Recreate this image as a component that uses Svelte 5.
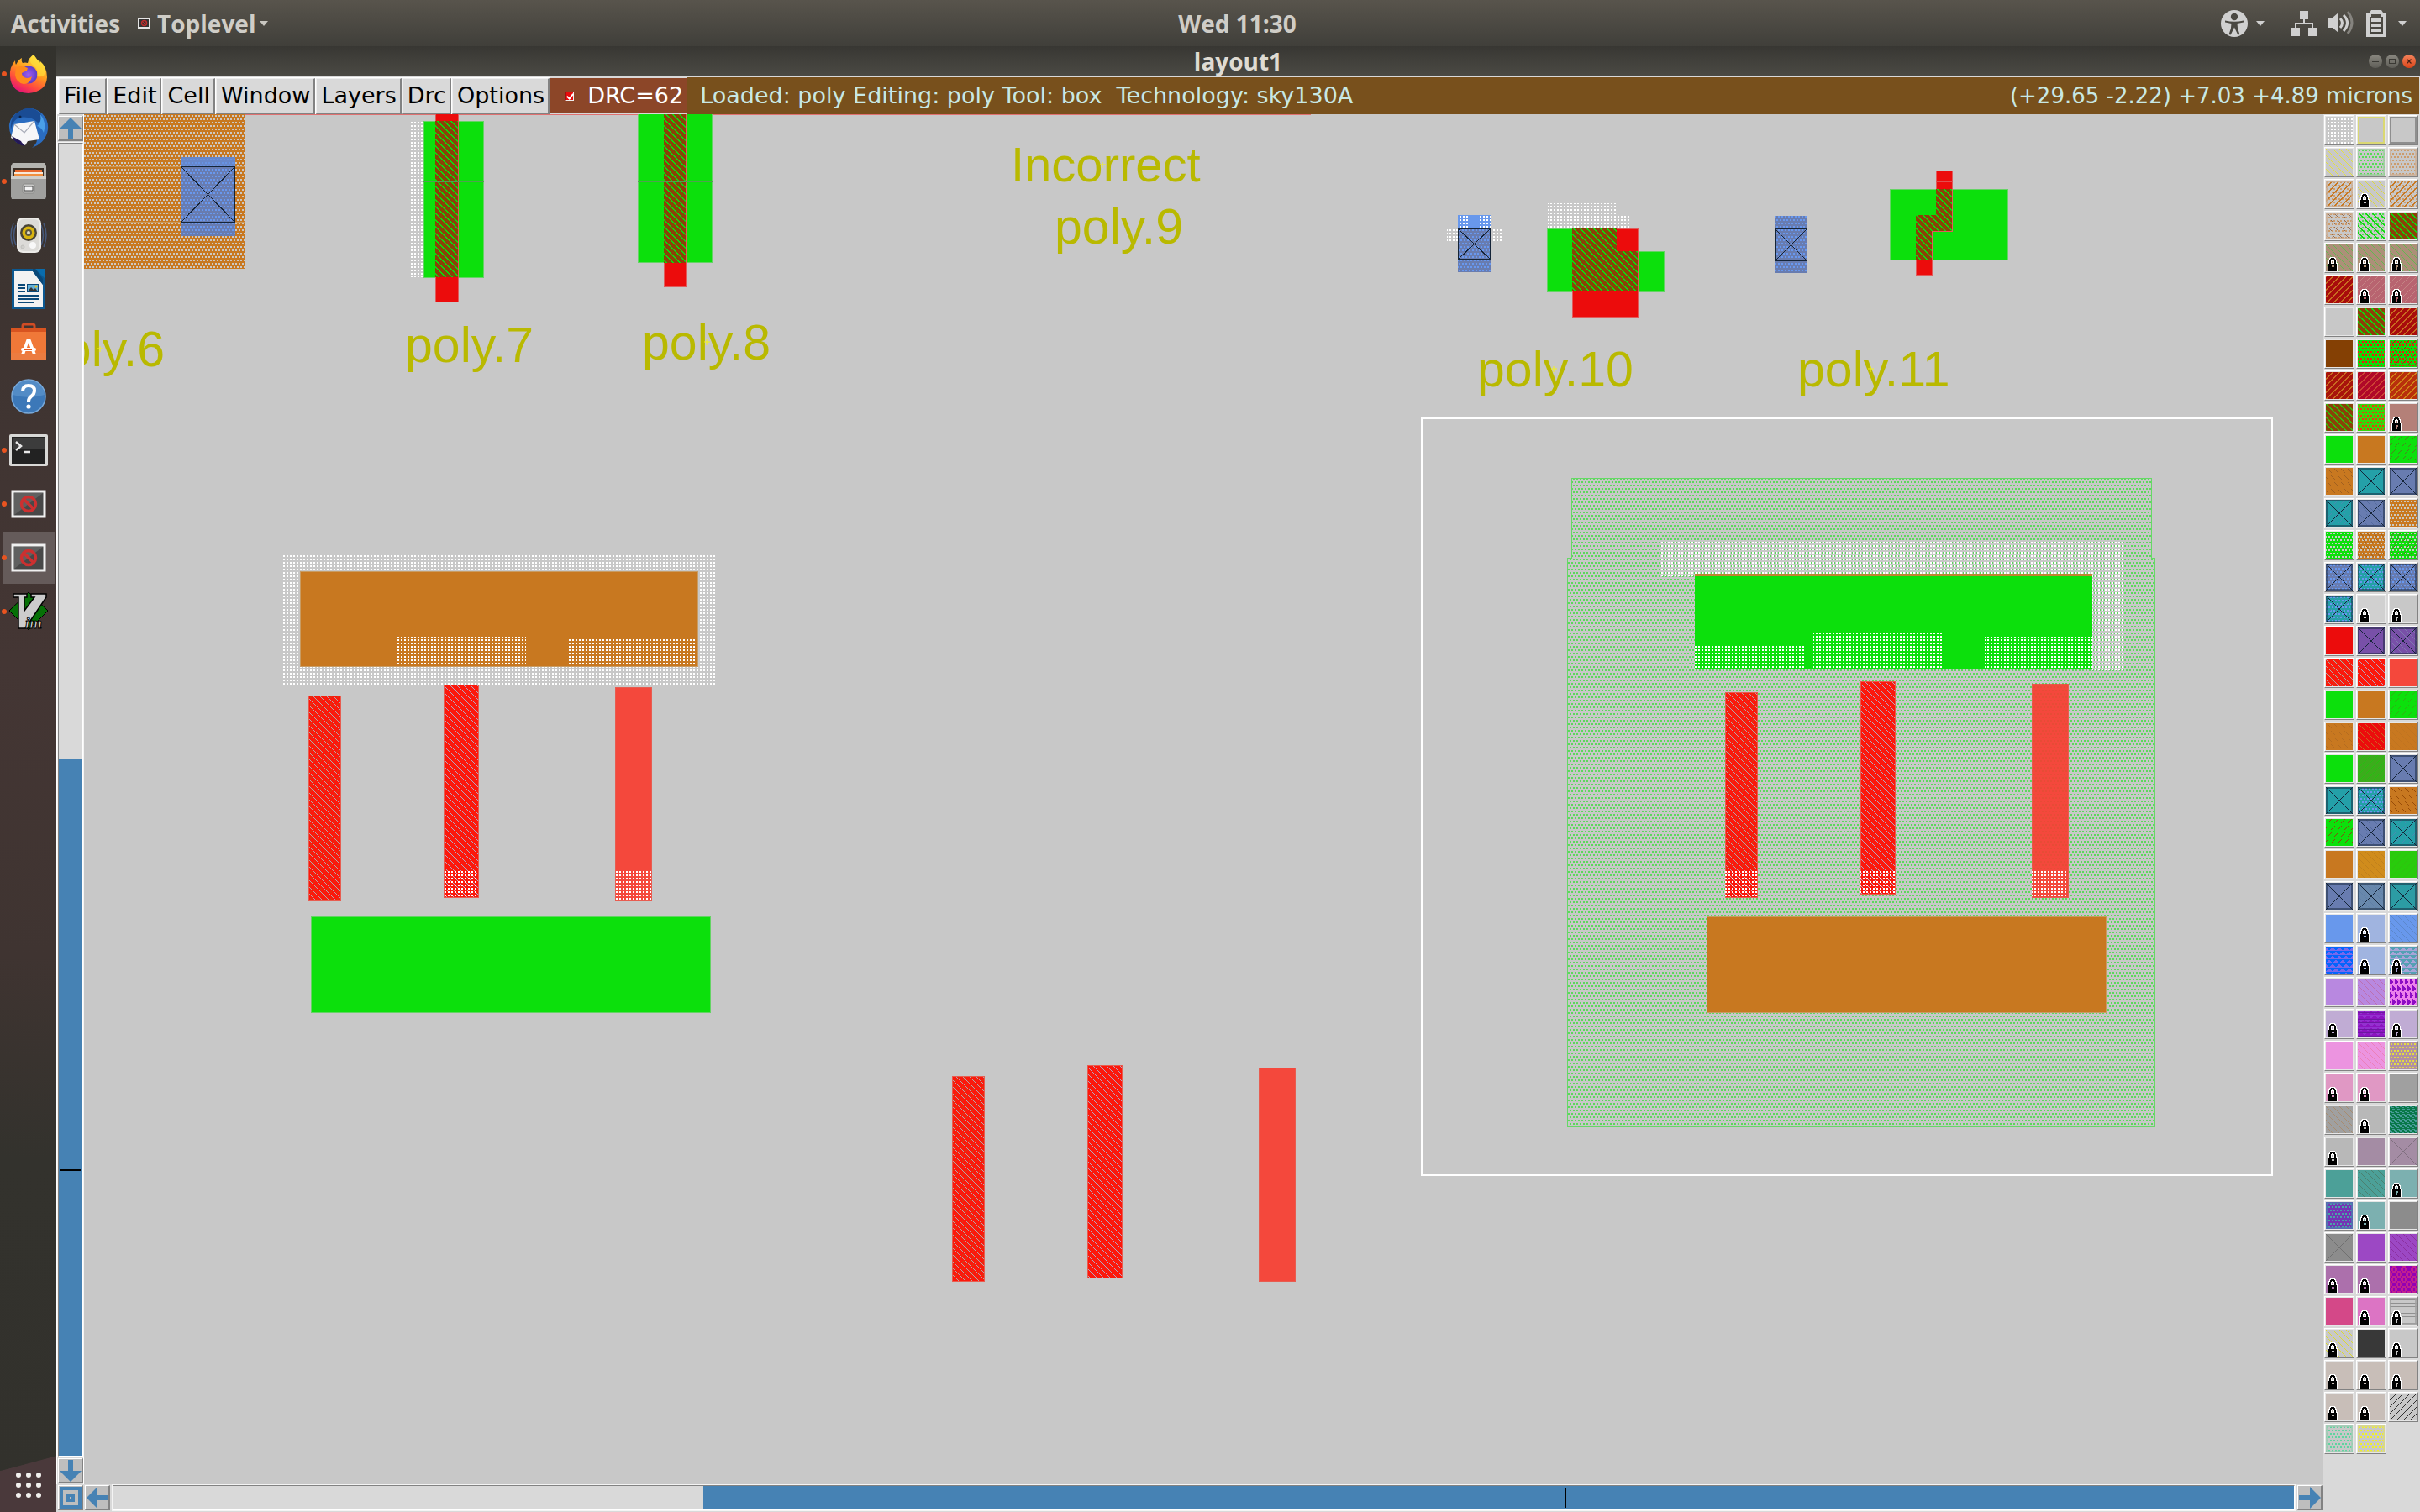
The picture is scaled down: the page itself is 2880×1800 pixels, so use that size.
<script>
  const menus = ['File', 'Edit', 'Cell', 'Window', 'Layers', 'Drc', 'Options'];

  const dock = [
    { id: 'firefox', label: 'Firefox', running: true },
    { id: 'thunderbird', label: 'Thunderbird' },
    { id: 'files', label: 'Files', running: true },
    { id: 'rhythmbox', label: 'Rhythmbox' },
    { id: 'writer', label: 'LibreOffice Writer' },
    { id: 'software', label: 'Ubuntu Software' },
    { id: 'help', label: 'Help' },
    { id: 'terminal', label: 'Terminal', running: true },
    { id: 'blocked', label: 'Toplevel', running: true },
    { id: 'blocked', label: 'Toplevel layout', running: true, active: true },
    { id: 'vim', label: 'Vim', running: true }
  ];

  // Layer swatches. First field is the fill, then overlays:
  // g grid, d staggered dots, b back hatch, f forward hatch, s/r short dashes,
  // t triangles, o rings, h horizontal rules, e edge, X cross, L locked
  const layers = [
    '#c8c8c8 g#fff', '#c8c8c8 e#dedc5c', '#c8c8c8 e#808080',
    '#c8c8c8 b#e4e23c', '#c8c8c8 d#54dc54 e#a0cca0', '#c8c8c8 d#cc9c6c e#ccb098',
    '#c8c8c8 d#cc9c6c F#c87820 e#ccb098', '#c8c8c8 b#dcda3c L', '#c8c8c8 d#cc9c6c F#c87820',
    '#c8c8c8 d#cc9c6c r#966e50 e#ccb098', '#c8c8c8 d#54dc54 B#0cdc0c', '#8a4208 B#0cdc0c',
    '#ac9078 b#62b850 L', '#ac9078 b#62b850 L', '#ac9078 b#62b850 L',
    '#a80c0c F#c86c20', '#b86470 f#c48484 L', '#b86470 f#c48484 L',
    '#c8c8c8', '#8a4208 B#0cdc0c', '#a80c0c F#c86c20',
    '#844004', '#0cdc0c d#ec1c0c', '#0cdc0c d#ec1c0c s#785008',
    '#a8140c F#c86c20', '#b00828 F#cc4434', '#b8300c F#d08418',
    '#8a4208 B#30c00c', '#34d80c d#ec3c0c', '#b48078 L',
    '#0ce00c', '#c87820', '#0ce00c s#508020',
    '#c87820 r#a06020', '#24a0a8 X', '#687cb0 X',
    '#24a0a8 s#488cb0 X', '#687cb0 r#546ca0 X', '#c87820 d#ccc8c0',
    '#0ce00c d#ccc8c8', '#c87820 d#ccc8c0 r#a06020', '#0ce00c d#ccc8c8 s#508020',
    '#687cb0 d#6898f0 X', '#24a0a8 d#6898f0 X', '#687cb0 d#6898f0 r#546ca0 X',
    '#24a0a8 d#6898f0 s#488cb0 X', '#d0d0d0 L', '#c8c8c8 L',
    '#ec0c0c', '#7850a8 X', '#7850a8 b#8078b0 X',
    '#fc180c b#b4a8a8 r#d04018', '#fc180c b#b4a8c0', '#f4483c',
    '#0ce00c', '#c87820', '#0ce00c s#30b014',
    '#c87820 r#b46c20', '#ec0c0c b#c86820', '#c87820 b#c07420',
    '#0ce00c', '#3cac1c f#24c010', '#687cb0 X',
    '#24a0a8 X', '#24a0a8 d#6898f0 X', '#c87820 r#984c08',
    '#0ce00c s#884810', '#687cb0 r#546ca0 X', '#24a0a8 s#488cb0 X',
    '#c87820', '#d08c1c b#c0801c', '#28cc0c f#30c010',
    '#687cb0 X', '#6888ac b#6080a8 X', '#2c9ca4 X',
    '#6898ec', '#a0b4e0 L', '#6898ec b#5c88cc',
    '#7868ec t#0464fc', '#a0b4e0 L', '#a8a4d8 t#54a0b4 L',
    '#b888e0', '#b888e0 b#bc70b0', '#ec80ec u#8c0cc4',
    '#c0acd4 L', '#8c14c0 t#9430d0 h#6c18a0', '#c0acd4 L',
    '#ec94e0', '#ec94e0 b#ec80b8', '#b090a4 d#e4dc40',
    '#e098c4 L', '#e098c4 L', '#a0a0a0',
    '#a0a0a0 b#a88c70', '#b8b8b8 L', '#087848 z#489c98',
    '#b8b8b8 L', '#a48ca4', '#a48ca4 x#807080',
    '#4ca098', '#4ca098 b#4c8070', '#7cb0b0 L',
    '#7434b4 d#48a4a8 e#5078b0', '#7cb0b0 L', '#8c8c8c',
    '#8c8c8c x#707070', '#9c48c4', '#9c48c4 b#8c30a0',
    '#ac70ac L', '#ac70ac L', '#9400b4 o#c02090',
    '#d44888', '#dc74c4 L', '#c8c8c8 h#909090 e#a0a0a0 L',
    '#c8c8c8 b#dcda30 L', '#383838', '#c8c8c8 L',
    '#c8beb8 L', '#c8beb8 L', '#c8beb8 L',
    '#c8beb8 L', '#c8beb8 L', '#c8c8c8 f#303030',
    '#c8c8c8 d#60d4a0 e#a0ccb4', '#c8c8c8 d#f0f028 e#d8d888'
  ].map((line, index) => {
    const [fill, ...marks] = line.split(' ');
    return {
      index,
      fill,
      locked: marks.includes('L'),
      crossed: marks.includes('X'),
      marks: marks.filter((m) => m.length > 1).map((m) => ({ kind: m[0], color: m.slice(1) }))
    };
  });

  function cells(stepX, stepY, stagger, draw) {
    let d = '';
    for (let row = 0, y = 0; y < 34; y += stepY, row++) {
      for (let x = stagger && row % 2 ? -stepX / 2 : 0; x < 34; x += stepX) d += draw(x, y);
    }
    return d;
  }
  function hatch(width, forward) {
    let d = '';
    for (let start = -32; start < 64; start += 8) {
      for (let i = 0; i < 32; i++) {
        const x = forward ? start + 31 - i : start + i;
        if (x + width > 0 && x < 32) d += `M${x} ${i}h${width}v1h-${width}z`;
      }
    }
    return d;
  }
  const marks = {
    g: cells(4, 4, false, (x, y) => `M${x + 2} ${y + 2}h2v2h-2z`),
    d: cells(4, 4, true, (x, y) => `M${x + 1} ${y + 1}h2v2h-2z`),
    b: hatch(1, false),
    B: hatch(2, false),
    f: hatch(1, true),
    F: hatch(2, true),
    s: cells(8, 8, true, (x, y) => [0, 1, 2, 3, 4].map((i) => `M${x + 6 - i} ${y + i}h1v1h-1z`).join('')),
    r: cells(8, 8, true, (x, y) => [0, 1, 2, 3, 4].map((i) => `M${x + 2 + i} ${y + 1 + i}h1v1h-1z`).join('')),
    t: cells(8, 5, true, (x, y) => `M${x} ${y}h8v1h-1v1h-1v1h-1v1h-2v-1h-1v-1h-1v-1h-1z`),
    u: cells(6, 8, true, (x, y) => `M${x} ${y}h1v1h1v1h1v1h1v2h-1v1h-1v1h-2z`),
    o: cells(12, 6, true, (x, y) => `M${x + 3} ${y}h4v2h2v4h-2v2h-4v-2h-2v-4h2zM${x + 4} ${y + 2}v4h2v-4z`),
    h: cells(32, 4, false, (x, y) => `M0 ${y + 2}h32v1h-32z`),
    z: cells(6, 3, true, (x, y) => `M${x} ${y}h3v1h1v1h-2v-1h-2zM${x + 4} ${y + 1}h1v1h-1z`),
    x: Array.from({ length: 32 }, (_, i) => `M${i} ${i}h1v1h-1zM${31 - i} ${i}h1v1h-1z`).join('')
  };

  const diagonal = (w) =>
    Array.from({ length: 8 }, (_, i) => `M${i} ${i}h${w}v1h-${w}z${i + w > 8 ? `M0 ${i}h1v1h-1z` : ''}`).join('');

  // Resistor bars that repeat in three places on the drawing
  const bars = [
    { x: 0, y: 13, w: 38, h: 244, fill: 'url(#barA)' },
    { x: 161, y: 0, w: 41, h: 253, fill: 'url(#barB)' },
    { x: 365, y: 3, w: 43, h: 254, fill: '#f4483c' }
  ];
  const groups = [
    { x: 367, y: 815, tails: [1, 2], tailY: 1034 },
    { x: 1133, y: 1268, tails: [], tailY: 0 },
    { x: 2053, y: 811, tails: [0, 1, 2], tailY: 1034 }
  ];
  const labels = [
    [43, 436, 'poly.6'], [482, 431, 'poly.7'], [764, 428, 'poly.8'], [1255, 290, 'poly.9'],
    [1758, 460, 'poly.10'], [2139, 460, 'poly.11']
  ];
  const pins = [[119, 415], [841, 407], [1312, 196], [1849, 439], [2226, 439]];

  let drc = $state(true);
</script>

<div class="desktop">
  <header class="topbar">
    <div class="left">
      <button class="plain">Activities</button>
      <button class="plain app">
        <svg width="15" height="13" viewBox="0 0 15 13"><rect x="1" y="1" width="13" height="11" fill="#333" stroke="#e4e4e4" stroke-width="2" /><circle cx="7.5" cy="6.5" r="3" fill="none" stroke="#c02c2c" stroke-width="1.5" /><path d="M5 4l5 5" stroke="#c02c2c" /></svg>
        Toplevel
        <svg class="caret" width="10" height="6" viewBox="0 0 10 6"><path d="M0 0h10l-5 6z" fill="#c9c7c1" /></svg>
      </button>
    </div>
    <button class="plain clock">Wed 11:30</button>
    <div class="right">
      <button class="plain tray" aria-label="Accessibility">
        <svg width="32" height="32" viewBox="0 0 32 32"><circle cx="16" cy="16" r="16" fill="#d0d0d0" /><circle cx="16" cy="8" r="4.2" fill="#4a4842" /><path d="M5 12.5q11 2.5 22 0v2l-7.5 1.4.6 6 2.4 7-2.2.7-4.3-9-4.3 9-2.2-.7 2.4-7 .6-6L5 14.500z" fill="#4a4842" /></svg>
        <svg width="10" height="6" viewBox="0 0 10 6"><path d="M0 0h10l-5 6z" fill="#d0d0d0" /></svg>
      </button>
      <button class="plain tray system" aria-label="System">
        <svg width="30" height="30" viewBox="0 0 30 30" fill="#d0d0d0"><path d="M10 0h10v10h-10zM0 20h10v10H0zM20 20h10v10H20zM14 10h2v4h10v6h-2v-4H6v4H4v-6h10z" /></svg>
        <svg width="31" height="30" viewBox="0 0 31 30"><path d="M0 8h5l7-6v24l-7-6H0z" fill="#d0d0d0" /><g fill="none"><path d="M14 9q5 5 0 11" stroke="#d0d0d0" stroke-width="3" /><path d="M18 5q9 9 0 19" stroke="#d0d0d0" stroke-width="3" /><path d="M23 1q10 13 0 26" stroke="#85837e" stroke-width="3" /></g></svg>
        <svg width="24" height="32" viewBox="0 0 24 32" fill="#d0d0d0"><path fill-rule="evenodd" d="M4 3l2-3h12l2 3v1h4v28H0V4h4zM4 8v20h16V8h-2V5H6v3z" /><path d="M6 10h12v4H6zM6 16h12v4H6zM6 22h12v4H6z" /></svg>
        <svg width="10" height="6" viewBox="0 0 10 6"><path d="M0 0h10l-5 6z" fill="#d0d0d0" /></svg>
      </button>
    </div>
  </header>

  <div class="body">
    <nav class="dock" aria-label="Dock">
      {#each dock as item}
        <button class="launcher" class:active={item.active} aria-label={item.label}>
          {#if item.running}<span class="dot"></span>{/if}
          <svg width="48" height="48" viewBox="0 0 48 48">
            {#if item.id === 'firefox'}
              <defs>
                <linearGradient id="fx1" x1="0.8" y1="0" x2="0.3" y2="1"><stop offset="0" stop-color="#fff04a" /><stop offset=".45" stop-color="#ff9a1e" /><stop offset=".75" stop-color="#ff4a3e" /><stop offset="1" stop-color="#e3107a" /></linearGradient>
                <radialGradient id="fx2"><stop offset="0" stop-color="#a05cf0" /><stop offset="1" stop-color="#5a3cc8" /></radialGradient>
              </defs>
              <path d="M30 1q3 5 8 10 0-2-1-3 9 8 9 20-1 17-22 19Q3 46 2 27 1 16 8 8q0 3 1 5 3-6 7-8-1 4 1 6 3-1 6 0 1-6 7-10z" fill="url(#fx1)" />
              <circle cx="24" cy="25" r="10.500" fill="url(#fx2)" />
              <path d="M9 17q6-4 14 0l-1 3-6 3q0 5 6 6 4 0 6-2-2 9-10 9-9-2-10-11z" fill="#ff8a1c" />
              <path d="M30 1q-8 8 0 13 6 5 4 13 10 2 10-7-1-9-9-12z" fill="#ffe03a" opacity=".65" />
            {:else if item.id === 'thunderbird'}
              <path d="M14 4Q28-3 40 7q10 10 6 24-4 12-18 17 6-5 6-10L10 42Q0 32 1 20 3 9 14 4z" fill="#2a6cc0" />
              <path d="M14 4q14-8 25 4 2 8-4 10-8-8-22-6-8 3-10 14Q1 10 14 4z" fill="#1a4c94" />
              <path d="M38 8q8 10 4 22-2-6-8-8 6-4 4-14z" fill="#4aa0e8" />
              <path d="M7 20l24-4 6 22-14 2-3 5-17-9z" fill="#f6f6f8" /><path d="M7 20l12 10 12-14" fill="none" stroke="#a8acb8" stroke-width="1.200" />
              <circle cx="14" cy="11" r="1.500" fill="#0c2448" /><path d="M4 34q4 10 16 12-4-4-5-6z" fill="#241858" />
            {:else if item.id === 'files'}
              <path d="M5 2h38l2 4v20H3V6z" fill="#b4b4b0" /><rect x="6" y="8" width="36" height="10" fill="#3a3028" /><path d="M8 10h32v3H8z" fill="#e8682c" /><path d="M7 13h34v2H7z" fill="#f8e8d8" /><path d="M7 15h34v4H7z" fill="#f09040" />
              <path d="M3 18h42v24l-1 3H4l-1-3z" fill="#a0a09e" /><path d="M3 18h42v3H3z" fill="#d0d0cc" /><rect x="17" y="27" width="14" height="11" rx="2" fill="#c8c8c6" stroke="#8a8a88" /><rect x="19" y="30" width="10" height="5" fill="#f4f4f4" stroke="#444" />
            {:else if item.id === 'rhythmbox'}
              <g fill="none" stroke="#46597c" stroke-width="1.500"><path d="M6 10q-6 14 0 28M9 12q-5 12 0 24M42 10q6 14 0 28M39 12q5 12 0 24" /></g>
              <rect x="10" y="3" width="29" height="42" rx="7" fill="#ecebe8" /><rect x="12" y="5" width="25" height="38" rx="6" fill="#dcdbd8" /><circle cx="24" cy="21" r="10" fill="#484438" /><circle cx="24" cy="21" r="7.500" fill="#d8b410" /><circle cx="24" cy="21" r="4" fill="#5c5840" /><circle cx="24" cy="21" r="2" fill="#e0dcc8" /><circle cx="29" cy="36" r="4" fill="#f8f8f8" /><circle cx="17" cy="38" r="2" fill="#d0cfcc" stroke="#c0c0bc" />
            {:else if item.id === 'writer'}
              <path d="M4 0h40v48H4z" fill="#0c5890" /><path d="M32 0h12v12z" fill="#0a6cac" /><path d="M7 3h22l12 16v26H7z" fill="#f2f2f2" /><path d="M29 3l12 16V12L32 0h-3z" fill="#0a4878" />
              <path d="M12 18h8v2h-8zM12 22h8v2h-8zM12 26h8v2h-8zM12 31h24v2H12zM12 35h24v2H12zM12 39h18v2H12z" fill="#0a4878" /><rect x="22" y="18" width="14" height="10" fill="#0a4878" /><path d="M23 19h12v8H23z" fill="#64b0d8" /><path d="M23 27l4-5 3 3 2-2 3 4z" fill="#343434" /><circle cx="33" cy="21" r="1.500" fill="#e8c020" />
            {:else if item.id === 'software'}
              <path d="M17 9V4q0-2 2-2h10q2 0 2 2v5" fill="none" stroke="#d04c24" stroke-width="3" /><path d="M3 7h42v6H3z" fill="#d85420" /><path d="M3 11h42v34H3z" fill="#f07838" /><path d="M3 36h42v9H3z" fill="#ec7c40" /><path d="M15 38l7-19h4l7 19h-4l-5-14-5 14z" fill="#fff" /><rect x="15" y="30" width="18" height="4" rx="2" fill="#fff" /><rect x="18" y="31" width="10" height="2" fill="#e85820" />
            {:else if item.id === 'help'}
              <circle cx="24" cy="24" r="20" fill="#3c78b8" stroke="#78a8d8" stroke-width="1.500" /><path d="M5 22Q8 5 24 5t19 17Q24 28 5 22z" fill="#5c94cc" opacity=".7" /><path d="M17 18q0-7 7-7t7 6q0 4-4 7-3 2-3 6" fill="none" stroke="#fff" stroke-width="4" /><circle cx="24" cy="36" r="2.600" fill="#fff" />
            {:else if item.id === 'terminal'}
              <rect x="1" y="5" width="46" height="38" rx="2" fill="#d8d8d6" /><rect x="4" y="8" width="40" height="32" fill="#222" /><rect x="5" y="9" width="38" height="14" fill="#3c3c3c" /><path d="M9 14l6 5-6 5M18 26h8" fill="none" stroke="#e8e8e8" stroke-width="2.500" />
            {:else if item.id === 'blocked'}
              <rect x="5" y="9" width="38" height="30" fill="#484848" stroke="#f0f0f0" stroke-width="3" /><path d="M7 11h34L7 37z" fill="#606060" /><circle cx="24" cy="24" r="8.500" fill="none" stroke="#cc3030" stroke-width="3.500" /><path d="M18 18l12 12" stroke="#cc3030" stroke-width="3.500" />
            {:else}
              <path d="M24 1l23 22-23 23L1 23z" fill="#067006" stroke="#000" /><path d="M6 3h16v4h-3v16L31 7h-4V3h18v4L20 44h-8V7H6z" fill="#ccc" stroke="#000" stroke-width="1.500" /><text x="20" y="44" class="vimtext">im</text>
            {/if}
          </svg>
        </button>
      {/each}
      <button class="launcher apps" aria-label="Show Applications">
        <svg width="30" height="30" viewBox="0 0 30 30" fill="#f2f1ee">
          {#each [3, 15, 27] as y}{#each [3, 15, 27] as x}<circle cx={x} cy={y} r="3" />{/each}{/each}
        </svg>
      </button>
    </nav>

    <section class="window">
      <div class="titlebar">
        <h1>layout1</h1>
        <div class="controls">
          <button aria-label="Minimize"><svg width="16" height="16" viewBox="0 0 16 16"><path d="M4 8.500h8" stroke="#3a3934" /></svg></button>
          <button aria-label="Maximize"><svg width="16" height="16" viewBox="0 0 16 16"><rect x="4.500" y="5.500" width="7" height="5" fill="none" stroke="#3a3934" /></svg></button>
          <button class="close" aria-label="Close"><svg width="16" height="16" viewBox="0 0 16 16"><path d="M5.500 5.500l5 5M10.500 5.500l-5 5" stroke="#4a2014" stroke-width="1.300" /></svg></button>
        </div>
      </div>

      <div class="menubar">
        <div class="menus">
          {#each menus as menu}<button>{menu}</button>{/each}
        </div>
        <label class="drc"><input type="checkbox" bind:checked={drc} />DRC=62</label>
        <p class="status">Loaded: poly Editing: poly Tool: box  Technology: sky130A</p>
        <p class="coords">(+29.65 -2.22) +7.03 +4.89 microns</p>
      </div>

      <div class="work">
        <div class="vscroll">
          <button class="arrow" aria-label="Scroll up"><svg width="26" height="26" viewBox="0 0 26 26"><path d="M13 0l13 13h-10v12h-6V13H0z" /></svg></button>
          <div class="trough"><div class="space"></div><div class="thumb"><span></span></div></div>
          <button class="arrow" aria-label="Scroll down"><svg width="26" height="26" viewBox="0 0 26 26"><path d="M13 26l13-13h-10V0h-6v13H0z" /></svg></button>
        </div>

        <svg class="canvas" width="100%" height="100%" role="img" aria-label="Layout drawing">
          <defs>
            <pattern id="grid" width="4" height="4" patternUnits="userSpaceOnUse"><path d="M1 1h2v2H1z" fill="#fff" /></pattern>
            <pattern id="dotsGreen" width="4" height="8" patternUnits="userSpaceOnUse"><path d="M0 1h2v2H0zM2 5h2v2H2z" fill="#5cd85c" /></pattern>
            <pattern id="dotsGray" width="4" height="8" patternUnits="userSpaceOnUse"><path d="M0 1h2v2H0zM2 5h2v2H2z" fill="#ccc8c4" /></pattern>
            <pattern id="dotsBlue" width="4" height="8" patternUnits="userSpaceOnUse"><path d="M0 1h2v2H0zM2 5h2v2H2z" fill="#6898f0" /></pattern>
            <pattern id="dotsRed" width="4" height="8" patternUnits="userSpaceOnUse"><path d="M0 1h2v2H0zM2 5h2v2H2z" fill="#d85030" /></pattern>
            <pattern id="gate" width="8" height="8" patternUnits="userSpaceOnUse"><path d="M0 0h8v8H0z" fill="#8a4208" /><path d={diagonal(2)} fill="#0cdc0c" /></pattern>
            <pattern id="barA" width="8" height="8" patternUnits="userSpaceOnUse"><path d="M0 0h8v8H0z" fill="#fc180c" /><path d="M6 1h1v1H6zM5 2h1v1H5zM2 5h1v1H2zM1 6h1v1H1z" fill="#cc4410" /><path d={diagonal(1)} fill="#b4a8a8" /></pattern>
            <pattern id="barB" width="8" height="8" patternUnits="userSpaceOnUse"><path d="M0 0h8v8H0z" fill="#fc180c" /><path d={diagonal(1)} fill="#b4a8c0" /></pattern>
          </defs>
          <g transform="translate(-100 -136)" shape-rendering="crispEdges">
            <path d="M100 136h1460v1H100z" fill="#e07070" />
            <path d="M100 136h192v184H100z" fill="#c87820" />
            <path d="M100 136h192v184H100z" fill="url(#dotsGray)" />
            <path d="M100 198h192v1H100zM100 264h192v1H100z" fill="#cc9858" />
            <path d="M215 187h65v94h-65z" fill="#687cb0" /><path d="M215 187h65v94h-65z" fill="url(#dotsBlue)" />
            <path d="M215 187h65v11h-65z" fill="#6890dc" opacity=".6" />
            <path d="M215.500 198.500h64v66h-64zl64 66m0-66l-64 66" class="contact" />

            <path d="M488 145h16v185h-16z" fill="url(#grid)" />
            <path d="M504 144h71v186h-71z" class="diff" />
            <path d="M518 130h27v229h-27z" class="poly" /><path d="M518 144h27v186h-27z" fill="url(#gate)" />
            <path d="M504 216h72v1h-72z" fill="#50a050" />
            <path d="M759 130h88v182h-88z" class="diff" />
            <path d="M790 130h26v211h-26z" class="poly" /><path d="M790 136h26v177h-26z" fill="url(#gate)" />
            <path d="M759 216h89v1h-89z" fill="#50a050" />

            <path d="M1722 272h13v15h-13zM1774 272h14v15h-14z" fill="url(#grid)" />
            <path d="M1735 256h39v68h-39z" fill="#687cb0" /><path d="M1735 272h39v52h-39z" fill="url(#dotsBlue)" />
            <path d="M1735 256h39v15h-39z" fill="#6898ec" /><path d="M1735 256h14v15h-14zM1759 256h15v15h-15z" fill="url(#grid)" />
            <path d="M1735.500 272.500h38v36h-38zl38 36m0-36l-38 36" class="contact" />
            <path d="M1842 242h82v14h16v16h-98z" fill="url(#grid)" />
            <path d="M1841 272h83v27h56v48h-139z" class="diff" />
            <path d="M1871 272h78v105h-78z" class="poly" /><path d="M1871 272h53v27h25v48h-78z" fill="url(#gate)" />

            <path d="M2112 257h39v68h-39z" fill="#687cb0" /><path d="M2112 257h39v68h-39z" fill="url(#dotsBlue)" />
            <path d="M2112.500 272.500h38v38h-38zl38 38m0-38l-38 38" class="contact" />
            <path d="M2249 225h140v84h-140z" class="diff" />
            <path d="M2304 203h19v72h-24v52h-19v-71h24z" class="poly" />
            <path d="M2304 225h19v50h-24v35h-19v-54h24z" fill="url(#gate)" />
            <path d="M2304 216h20v1h-20z" fill="#e05050" />

            <path d="M1692 498h1012v901H1692z" fill="none" stroke="#fff" stroke-width="2" />
            <path d="M1870 569h690v95h4v677h-699V664h5z" fill="url(#dotsGreen)" stroke="#66d866" />
            <path d="M1977 645h552v153h-39V686h-513z" fill="url(#grid)" />
            <path d="M2017 683h473v3h-473z" fill="#c08430" />
            <path d="M2017 686h473v111h-473z" fill="#0ce00c" />
            <path d="M2017 768h131v28h-131zM2158 754h155v42h-155zM2362 758h128v38h-128z" fill="url(#grid)" />
            <path d="M2031 1091h475v114h-475z" class="tap" />

            <path d="M335 660h518v155H335z" fill="url(#grid)" />
            <path d="M357 680h473v113H357z" class="tap" />
            <path d="M471 758h155v34h-155zM675 761h155v31h-155z" fill="url(#grid)" />
            <path d="M370 1091h475v114H370z" class="diff" />

            {#each groups as group}
              {#each bars as bar, i}
                <rect x={group.x + bar.x} y={group.y + bar.y} width={bar.w} height={bar.h} fill={bar.fill} stroke="#e85c50" />
                {#if group.x > 2000 && i === 2}<rect x={group.x + bar.x} y={group.y + bar.y} width={bar.w} height={bar.h} fill="url(#dotsRed)" opacity=".5" />{/if}
                {#if group.tails.includes(i)}<rect x={group.x + bar.x} y={group.tailY} width={bar.w} height={group.y + bar.y + bar.h - group.tailY} fill="url(#grid)" />{/if}
              {/each}
            {/each}
          </g>
          <g transform="translate(-100 -136)">
            {#each labels as [x, y, text]}<text {x} {y} class="label">{text}</text>{/each}
            <text x="1203" y="216" class="label heading">Incorrect</text>
            {#each pins as [x, y]}<path d="M{x - 3} {y}h7M{x} {y - 3}v7" stroke="#f4f41c" fill="none" />{/each}
          </g>
        </svg>

        <div class="palette">
          {#each layers as layer (layer.index)}
            <button aria-label="Layer {layer.index + 1}">
              <svg width="32" height="32" viewBox="0 0 32 32" shape-rendering="crispEdges">
                <rect width="32" height="32" fill={layer.fill} />
                {#each layer.marks as mark}
                  {#if mark.kind === 'e'}
                    <path d="M1 1h30v30H1z" fill="none" stroke={mark.color} stroke-width="2" opacity=".8" />
                  {:else}
                    <path d={marks[mark.kind]} fill={mark.color} />
                  {/if}
                {/each}
                {#if layer.crossed}
                  <path d="M1 1h30v30H1z" fill="none" stroke="#142438" stroke-width="2" opacity=".5" />
                  <path d={marks.x} fill="#142438" />
                {/if}
                {#if layer.locked}
                  <path d="M4 16h1v-1h6v1h1v2h1v4h1v10H2V22h1v-4h1z" fill="#fff" />
                  <path d="M5 17h1v-1h4v1h1v2h1v4h1v9H3v-9h1v-4h1zM6 19v4h4v-4H9v-1H7v1z" fill="#000" fill-rule="evenodd" />
                  <path d="M7 20h2v2H7zM7 25h3v2H9v3H8v-3H7z" fill={layer.fill} />
                {/if}
              </svg>
            </button>
          {/each}
        </div>

        <button class="arrow corner" aria-label="Zoom"><svg width="26" height="26" viewBox="0 0 26 26"><path fill-rule="evenodd" d="M0 0h26v26H0zM4 4v18h18V4z" /><path fill-rule="evenodd" d="M8 8h10v10H8zM12 12v2h2v-2z" /></svg></button>
        <div class="hscroll">
          <button class="arrow" aria-label="Scroll left"><svg width="26" height="26" viewBox="0 0 26 26"><path d="M0 13l13-13v10h13v6H13v10z" /></svg></button>
          <div class="trough"><div class="space"></div><div class="thumb"><span></span></div></div>
          <button class="arrow" aria-label="Scroll right"><svg width="26" height="26" viewBox="0 0 26 26"><path d="M26 13L13 0v10H0v6h13v10z" /></svg></button>
        </div>
      </div>
    </section>
  </div>
</div>

<style>
  :global(body) { background: #33322e; }
  * { box-sizing: border-box; }
  button { font: inherit; color: inherit; margin: 0; padding: 0; border: 0; background: none; }
  svg { display: block; flex: none; }
  p, h1 { margin: 0; }
  .desktop { min-height: 100vh; display: flex; flex-direction: column; font-family: "DejaVu Sans", sans-serif; }

  .topbar {
    height: 55px; flex: none; display: flex; align-items: center;
    background: linear-gradient(#58544c, #403f3a);
    font: bold 28px "Open Sans", "Noto Sans", sans-serif; color: #cfcdc7;
  }
  .left, .right { flex: 1; display: flex; align-items: center; }
  .left { padding-left: 13px; gap: 21px; }
  .right { justify-content: flex-end; padding-right: 16px; gap: 32px; }
  .plain { display: flex; align-items: center; white-space: nowrap; }
  .app { gap: 8px; }
  .caret { margin-left: -3px; }
  .clock { margin-left: 68px; }
  .tray { gap: 10px; }
  .system { gap: 14px; }

  .body { flex: 1; display: grid; grid-template-columns: 67px 1fr; min-height: 0; }
  .dock {
    display: flex; flex-direction: column; padding-top: 1px;
    background:
      linear-gradient(165deg, transparent 21%, #4a393b 22%) bottom / 100% 67px no-repeat,
      linear-gradient(#33322d 0, #3e3431 18%, #443634 42%, #3f3431 62%, #33322d 76%, #32312c 100%);
  }
  .launcher { position: relative; height: 64px; display: grid; place-items: center; border-radius: 4px; }
  .launcher.active { background: linear-gradient(#655b5a, #655b5a) center / 62px 62px no-repeat; }
  .dot { position: absolute; left: 2px; top: 29px; width: 6px; height: 6px; border-radius: 50%; background: #e95420; }
  .apps { margin-top: auto; }
  .vimtext { font: italic bold 19px "Liberation Serif", serif; fill: #ddd; stroke: #000; stroke-width: 1px; }

  .window { display: flex; flex-direction: column; min-width: 0; background: #d9d9d9; }
  .titlebar {
    height: 36px; flex: none; display: grid; place-items: center; position: relative;
    background: linear-gradient(#383733, #4b4a44);
  }
  h1 { font: bold 28px/36px "Open Sans", "Noto Sans", sans-serif; color: #dfdbd2; }
  .controls { position: absolute; right: 5px; top: 10px; display: flex; gap: 4px; }
  .controls button { border-radius: 50%; background: linear-gradient(#8a8880, #5e5d57); }
  .controls .close { background: linear-gradient(#f4845c, #dc4418); }

  .menubar {
    display: flex; height: 45px; flex: none; border-top: 1px solid #d9d9d9; border-right: 1px solid #d9d9d9;
    background: #78501c; color: #c8e8e4; font-size: 27px; line-height: 40px; white-space: pre;
  }
  .menus { display: flex; gap: 1px; padding: 1px 0 0 3px; background: #fff; color: #000; }
  .menus button { padding: 0 4px 0 5px; background: #d9d9d9; border: solid; border-width: 1px 2px 2px 1px; border-color: #eee #828282 #828282 #eee; }
  .drc { display: flex; align-items: center; gap: 16px; padding: 0 4px 0 18px; background: #8c4628; color: #fff; border: solid #d9d9d9; border-width: 1px 1px 1px 0; }
  .drc input { appearance: none; margin: 0; width: 11px; height: 11px; background: #e80c0c; border: 1px solid; border-color: #a01010 #eee #eee #a01010; position: relative; }
  .drc input:checked::after { content: ""; position: absolute; left: 3px; top: 0; width: 3px; height: 6px; border: solid #fff; border-width: 0 2px 2px 0; transform: rotate(40deg); }
  .status { flex: 1; padding: 2px 0 0 15px; }
  .coords { padding: 2px 8px 0 0; font-size: 26px; }

  .work {
    flex: 1; min-height: 0; display: grid;
    grid-template: 1fr 33px / 33px 1fr 115px;
  }
  .canvas { background: #c8c8c8; }
  .arrow { width: 30px; height: 30px; flex: none; display: grid; place-items: center; background: #bebebe; border: solid; border-width: 1px 2px 2px 1px; border-color: #fff #828282 #828282 #fff; fill: #4682b4; }
  .vscroll { display: flex; flex-direction: column; gap: 2px; padding: 2px 0 1px 1px; border-left: 1px solid #fff; background: #d9d9d9; border-right: 1px solid #fff; }
  .trough { flex: 1; display: flex; border: 1px solid; border-color: #828282 #fff #fff #828282; outline: 1px solid #f4f4f4; background: #d9d9d9; }
  .vscroll .trough { flex-direction: column; }
  .vscroll .space { flex: 733; }
  .vscroll .thumb { flex: 830; padding: 0 2px; }
  .thumb { background: #4682b4; display: flex; align-items: center; justify-content: center; }
  .vscroll .thumb { align-items: flex-start; }
  .vscroll .thumb span { flex: 1; height: 2px; margin-top: 488px; background: #000; }
  .corner { margin: 1px 0 0 2px; }
  .hscroll { display: flex; gap: 3px; padding: 1px 1px 2px 1px; }
  .hscroll .space { flex: 703; }
  .hscroll .thumb { flex: 1895; padding: 2px 0; }
  .hscroll .thumb span { align-self: stretch; width: 2px; margin-left: 158px; background: #000; }

  .palette { padding: 1px; display: grid; grid-template-columns: repeat(3, 36px); grid-auto-rows: 36px; gap: 2px; align-content: start; }
  .palette button { padding: 1px; border: 1px solid; border-color: #fff #828282 #828282 #fff; background: #e6e6e6; }

  .diff { fill: #0ce00c; stroke: #64d464; }
  .poly { fill: #ec0c0c; stroke: #e05c5c; }
  .tap { fill: #c87820; stroke: #c89c64; }
  .contact { fill: none; stroke: #142438; }
  .label { font: 59px "Liberation Sans", sans-serif; fill: #b9b900; }
  .heading { font-size: 58px; }
</style>
